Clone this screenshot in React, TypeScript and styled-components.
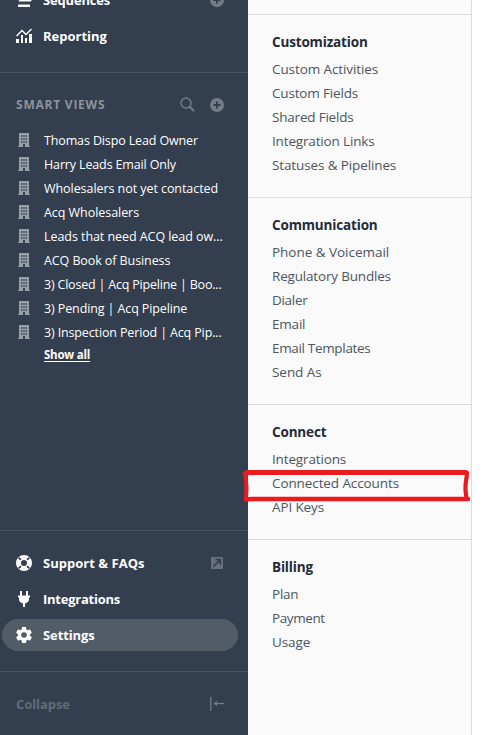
import React from 'react';
import styled, { createGlobalStyle } from 'styled-components';

const GlobalStyle = createGlobalStyle`
  *, *::before, *::after { box-sizing: border-box; }
  html, body { margin: 0; padding: 0; background: #fff; overflow: hidden; }
  svg { display: block; }
`;

const Page = styled.div`
  display: flex;
  width: 487px;
  height: 735px;
  overflow: hidden;
  font-family: 'Open Sans', 'Noto Sans', sans-serif;
`;

const Sidebar = styled.aside`
  display: flex;
  flex-direction: column;
  flex: 0 0 248px;
  background: #333e4e;
  color: #fff;
`;

const NavBlock = styled.nav<{ $height: number; $end?: boolean }>`
  display: flex;
  flex: 0 0 ${(p) => p.$height}px;
  flex-direction: column;
  justify-content: ${(p) => (p.$end ? 'flex-end' : 'flex-start')};
  gap: 4px;
  min-height: 0;
  padding: ${(p) => (p.$end ? '0 10px 20px 2px' : '16px 10px 20px 2px')};
  border-bottom: 1px solid #4a5462;
`;

const NavItem = styled.a<{ $active?: boolean }>`
  display: flex;
  flex: 0 0 32px;
  align-items: center;
  padding: 0 14px;
  border-radius: 16px;
  background: ${(p) => (p.$active ? '#525c67' : 'transparent')};
`;

const NavIcon = styled.span`
  flex: 0 0 27px;
`;

const NavText = styled.span<{ $track: number }>`
  flex: 1;
  font-size: 13px;
  font-weight: 700;
  line-height: 20px;
  letter-spacing: ${(p) => p.$track}px;
  white-space: nowrap;
`;

const SmartViews = styled.section`
  display: flex;
  flex: 0 0 458px;
  flex-direction: column;
  padding: 22px 0 0;
  border-bottom: 1px solid #4a5462;
`;

const SmartHeader = styled.header`
  display: flex;
  align-items: center;
  gap: 15px;
  height: 20px;
  margin-bottom: 13px;
  padding: 0 24px 1px 16px;
`;

const SmartTitle = styled.h2`
  flex: 1;
  margin: 0;
  color: #8d939b;
  font-size: 12px;
  font-weight: 700;
  line-height: 20px;
  letter-spacing: 0.77px;
`;

const ViewItem = styled.a`
  display: flex;
  align-items: center;
  height: 24px;
  padding-left: 18px;
`;

const ViewText = styled.span<{ $track: number }>`
  margin-left: 14px;
  padding-top: 1px;
  font-size: 12.5px;
  line-height: 23px;
  letter-spacing: ${(p) => p.$track}px;
  white-space: nowrap;
`;

const ShowAll = styled.a`
  align-self: flex-start;
  margin: 1px 0 0 44px;
  font-size: 11.5px;
  font-weight: 700;
  line-height: 20px;
  letter-spacing: -0.23px;
  text-decoration: underline;
  text-underline-offset: 1.5px;
`;

const Collapse = styled.button`
  display: flex;
  align-items: center;
  justify-content: space-between;
  height: 63px;
  padding: 0 24px 0 16px;
  border: 0;
  background: none;
  color: #626c78;
  font: 700 13px/20px 'Open Sans', sans-serif;
  letter-spacing: -0.07px;
`;

const Panel = styled.main`
  display: flex;
  flex: 0 0 224px;
  flex-direction: column;
  padding-top: 14px;
  border-right: 1px solid #dcdcde;
  background: #fafafa;
`;

const Group = styled.section`
  padding: 16px 24px 20px;
  border-top: 1px solid #dcdcde;
`;

const GroupTitle = styled.h3`
  margin: 0 0 4px;
  color: #232b38;
  font-size: 13.5px;
  font-weight: 700;
  line-height: 22px;
  letter-spacing: -0.16px;
`;

const GroupLink = styled.a<{ $track: number }>`
  display: block;
  position: relative;
  height: 24px;
  color: #4d5560;
  font-size: 13.5px;
  line-height: 24px;
  letter-spacing: ${(p) => p.$track}px;
  white-space: nowrap;
`;

const Marker = styled.svg`
  position: absolute;
  top: -5px;
  left: -32px;
  z-index: 1;
  pointer-events: none;
`;

const PlusIcon = () => (
  <svg width="14" height="14" viewBox="0 0 14 14">
    <circle cx="7" cy="7" r="7" fill="#747c87" />
    <path d="M7 3.4v7.2M3.4 7h7.2" stroke="#333e4e" strokeWidth="2" />
  </svg>
);

const SearchIcon = () => (
  <svg width="15" height="15" viewBox="0 0 15 15" fill="none" stroke="#747c87">
    <circle cx="6" cy="6" r="5" strokeWidth="1.5" />
    <path d="M9.7 9.7 14 14" strokeWidth="2" />
  </svg>
);

const SequenceIcon = () => (
  <svg width="16" height="16" viewBox="0 0 16 16" fill="#fff">
    <path d="M2 3h12v2H2zM3.5 7.5H16l-1 2H2.5zM2 12.5h12V15H2z" />
  </svg>
);

const ReportIcon = () => (
  <svg width="16" height="16" viewBox="0 0 16 16">
    <path d="M0 11h3v4H0zM5 7h2v8H5zM9 10h2v5H9zM13 6h3v9h-3z" fill="#fff" />
    <path d="M.5 8 6 2.5l4 4L15.5 1" fill="none" stroke="#fff" strokeWidth="1.4" />
  </svg>
);

const BuildingIcon = () => (
  <svg width="12" height="14" viewBox="0 0 12 14">
    <path d="M1 0h10v13h1v1H7v-3H5v3H0v-1h1z" fill="#999fa7" />
    <path d="M3 2h1.4v2H3zM5.3 2h1.4v2H5.3zM7.6 2H9v2H7.6zM3 5h1.4v2H3zM5.3 5h1.4v2H5.3zM7.6 5H9v2H7.6zM3 8h1.4v2H3zM5.3 8h1.4v2H5.3zM7.6 8H9v2H7.6z" fill="#4b5563" />
  </svg>
);

const SupportIcon = () => (
  <svg width="16" height="16" viewBox="0 0 16 16" fill="none">
    <circle cx="8" cy="8" r="5.5" stroke="#fff" strokeWidth="5" />
    <path d="m2.7 2.7 2.2 2.2m6.2 6.2 2.2 2.2m0-10.6-2.2 2.2m-6.2 6.2-2.2 2.2" stroke="#333e4e" strokeWidth="1.7" />
  </svg>
);

const PlugIcon = () => (
  <svg width="16" height="16" viewBox="0 0 16 16" fill="#fff">
    <path d="M4 0h2v4.500h4V0h2v4.500h2v2h-1v2c0 2-1.500 3.300-4 4V16H7v-3.500c-2.500-.7-4-2-4-4v-2H2v-2h2z" />
  </svg>
);

const GearIcon = () => (
  <svg width="16" height="16" viewBox="2 2 20 20" fill="#fff">
    <path d="M19.43 12.98c.04-.32.07-.64.07-.98s-.03-.66-.07-.98l2.11-1.65c.19-.15.24-.42.12-.64l-2-3.46c-.12-.22-.39-.3-.61-.22l-2.49 1c-.52-.4-1.08-.73-1.69-.98l-.38-2.65C14.46 2.18 14.25 2 14 2h-4c-.25 0-.46.18-.49.42l-.38 2.65c-.61.25-1.17.59-1.69.98l-2.49-1c-.23-.09-.49 0-.61.22l-2 3.46c-.13.22-.07.49.12.64l2.11 1.65c-.04.32-.07.65-.07.98s.03.66.07.98l-2.11 1.65c-.19.15-.24.42-.12.64l2 3.46c.12.22.39.3.61.22l2.49-1c.52.4 1.08.73 1.69.98l.38 2.65c.03.24.24.42.49.42h4c.25 0 .46-.18.49-.42l.38-2.65c.61-.25 1.17-.59 1.69-.98l2.49 1c.23.09.49 0 .61-.22l2-3.46c.12-.22.07-.49-.12-.64zM12 15.5a3.5 3.5 0 1 1 0-7 3.5 3.5 0 0 1 0 7z" />
  </svg>
);

const ExternalIcon = () => (
  <svg width="13" height="12" viewBox="0 0 13 12" fill="none">
    <rect width="12" height="12" rx="1" fill="#666f7b" />
    <path d="m2.5 9.5 6-6M4.500 2.700h4.800v4.800" stroke="#333e4e" strokeWidth="1.7" />
  </svg>
);

const CollapseIcon = () => (
  <svg width="14" height="14" viewBox="0 0 14 14" fill="none" stroke="#747c87">
    <path d="M.8 0v14" strokeWidth="1.3" />
    <path d="M14 6.5H4.5" strokeWidth="1.3" />
    <path d="M3.5 6.5 7 4v5z" fill="#747c87" stroke="none" />
  </svg>
);

const views = [
  { label: 'Thomas Dispo Lead Owner', track: -0.13 },
  { label: 'Harry Leads Email Only', track: -0.14 },
  { label: 'Wholesalers not yet contacted', track: -0.06 },
  { label: 'Acq Wholesalers', track: -0.05 },
  { label: 'Leads that need ACQ lead ow...', track: -0.06 },
  { label: 'ACQ Book of Business', track: -0.09 },
  { label: '3) Closed | Acq Pipeline | Boo...', track: -0.2 },
  { label: '3) Pending | Acq Pipeline', track: -0.11 },
  { label: '3) Inspection Period | Acq Pip...', track: -0.14 },
];

const groups = [
  {
    title: 'Customization',
    links: [
      { label: 'Custom Activities', track: -0.1 },
      { label: 'Custom Fields', track: -0.17 },
      { label: 'Shared Fields', track: -0.2 },
      { label: 'Integration Links', track: -0.16 },
      { label: 'Statuses & Pipelines', track: -0.12 },
    ],
  },
  {
    title: 'Communication',
    links: [
      { label: 'Phone & Voicemail', track: -0.03 },
      { label: 'Regulatory Bundles', track: -0.18 },
      { label: 'Dialer', track: -0.3 },
      { label: 'Email', track: -0.2 },
      { label: 'Email Templates', track: -0.33 },
      { label: 'Send As', track: -0.05 },
    ],
  },
  {
    title: 'Connect',
    links: [
      { label: 'Integrations', track: -0.15 },
      { label: 'Connected Accounts', track: -0.1, marked: true },
      { label: 'API Keys', track: -0.12 },
    ],
  },
  {
    title: 'Billing',
    links: [
      { label: 'Plan', track: -0.23 },
      { label: 'Payment', track: -0.4 },
      { label: 'Usage', track: -0.1 },
    ],
  },
];

const HandDrawnBox = () => (
  <Marker width="232" height="40" viewBox="0 0 232 40" fill="none" stroke="#e91b1e" strokeLinecap="round" strokeLinejoin="round">
    <path d="M5 8 7 6.500h219" strokeWidth="5" />
    <path d="M5.500 8 6.500 22l-.5 11.500" strokeWidth="4" />
    <path d="M227 7c-.5 8-2 10-1.500 17l1 9" strokeWidth="4.200" />
    <path d="M6 33.500 12 33h216" strokeWidth="4.600" />
  </Marker>
);

export default function App() {
  return (
    <Page>
      <GlobalStyle />
      <Sidebar>
        <NavBlock $height={73} $end>
          <NavItem>
            <NavIcon><SequenceIcon /></NavIcon>
            <NavText $track={-0.18}>Sequences</NavText>
            <PlusIcon />
          </NavItem>
          <NavItem>
            <NavIcon><ReportIcon /></NavIcon>
            <NavText $track={0}>Reporting</NavText>
          </NavItem>
        </NavBlock>
        <SmartViews>
          <SmartHeader>
            <SmartTitle>SMART VIEWS</SmartTitle>
            <SearchIcon />
            <PlusIcon />
          </SmartHeader>
          {views.map((view) => (
            <ViewItem key={view.label}>
              <BuildingIcon />
              <ViewText $track={view.track}>{view.label}</ViewText>
            </ViewItem>
          ))}
          <ShowAll>Show all</ShowAll>
        </SmartViews>
        <NavBlock $height={141}>
          <NavItem>
            <NavIcon><SupportIcon /></NavIcon>
            <NavText $track={0.03}>Support &amp; FAQs</NavText>
            <ExternalIcon />
          </NavItem>
          <NavItem>
            <NavIcon><PlugIcon /></NavIcon>
            <NavText $track={-0.25}>Integrations</NavText>
          </NavItem>
          <NavItem $active>
            <NavIcon><GearIcon /></NavIcon>
            <NavText $track={-0.1}>Settings</NavText>
          </NavItem>
        </NavBlock>
        <Collapse>
          Collapse
          <CollapseIcon />
        </Collapse>
      </Sidebar>
      <Panel>
        {groups.map((group) => (
          <Group key={group.title}>
            <GroupTitle>{group.title}</GroupTitle>
            {group.links.map((link) => (
              <GroupLink key={link.label} $track={link.track}>
                {link.label}
                {'marked' in link && <HandDrawnBox />}
              </GroupLink>
            ))}
          </Group>
        ))}
      </Panel>
    </Page>
  );
}
